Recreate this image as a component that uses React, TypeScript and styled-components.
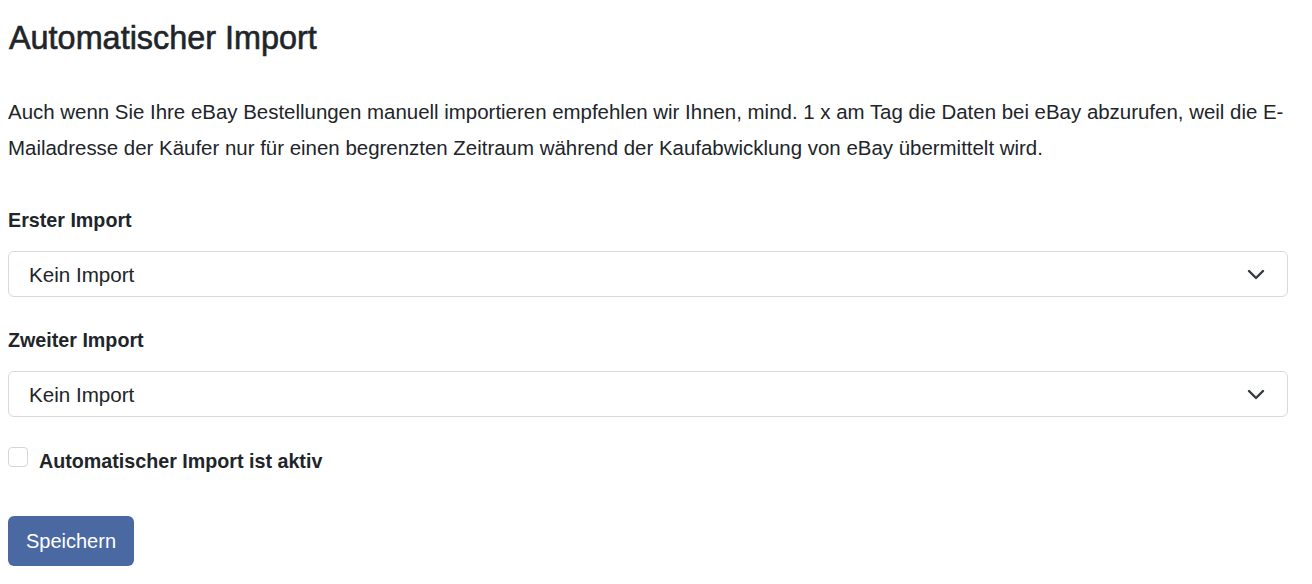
import React from "react";
import styled, { createGlobalStyle } from "styled-components";

const GlobalStyle = createGlobalStyle`
  html, body {
    margin: 0;
    padding: 0;
    background: #ffffff;
  }
  body {
    font-family: "Liberation Sans", Arial, Helvetica, sans-serif;
    color: #212529;
    -webkit-font-smoothing: antialiased;
  }
`;

const Page = styled.div`
  width: 1280px;
  padding: 19px 0 0 8px;
  display: flex;
  flex-direction: column;
`;

const Title = styled.h1`
  margin: 0;
  padding-left: 1px;
  font-size: 32.4px;
  line-height: 38px;
  font-weight: 400;
  -webkit-text-stroke: 0.6px #212529;
  color: #212529;
`;

const Intro = styled.p`
  margin: 37px 0 0;
  font-size: 20.45px;
  line-height: 36px;
  font-weight: 400;
`;

const Field = styled.div<{ $top: number }>`
  display: flex;
  flex-direction: column;
  gap: 16px;
  margin-top: ${(p) => p.$top}px;
`;

const Label = styled.label`
  font-size: 19.7px;
  line-height: 30px;
  font-weight: 700;
  color: #212529;
`;

const SelectWrap = styled.div`
  position: relative;
  width: 100%;
`;

const Select = styled.select`
  appearance: none;
  -webkit-appearance: none;
  width: 100%;
  height: 46px;
  box-sizing: border-box;
  padding: 0 50px 0 20px;
  border: 1px solid #d6d9dd;
  border-radius: 6px;
  background: #ffffff;
  font-family: "Liberation Sans", Arial, Helvetica, sans-serif;
  font-size: 20.6px;
  color: #212529;
  outline: none;
`;

const Chevron = styled.svg`
  position: absolute;
  right: 23px;
  top: 50%;
  transform: translateY(-50%);
  pointer-events: none;
`;

const CheckRow = styled.div`
  display: flex;
  align-items: flex-start;
  gap: 11px;
  margin-top: 29px;
`;

const Check = styled.input`
  appearance: none;
  -webkit-appearance: none;
  width: 20px;
  height: 20px;
  margin: 1px 0 0;
  box-sizing: border-box;
  border: 1px solid #d3d6da;
  border-radius: 4px;
  background: #ffffff;
`;

const CheckLabel = styled.label`
  font-size: 19.7px;
  line-height: 30px;
  font-weight: 700;
`;

const SaveButton = styled.button`
  align-self: flex-start;
  margin-top: 40px;
  width: 126px;
  height: 50px;
  border: none;
  border-radius: 6px;
  background: #4a69a2;
  color: #ffffff;
  font-family: "Liberation Sans", Arial, Helvetica, sans-serif;
  font-size: 20px;
  cursor: pointer;
`;

const ImportSelect: React.FC<{ id: string }> = ({ id }) => (
  <SelectWrap>
    <Select id={id} defaultValue="none">
      <option value="none">Kein Import</option>
    </Select>
    <Chevron width="18" height="12" viewBox="0 0 18 12" fill="none">
      <path d="M2 3l7 7 7-7" stroke="#343a40" strokeWidth="2.4" strokeLinecap="round" strokeLinejoin="round" />
    </Chevron>
  </SelectWrap>
);

export default function App() {
  return (
    <>
      <GlobalStyle />
      <Page>
        <Title>Automatischer Import</Title>
        <Intro>
          Auch wenn Sie Ihre eBay Bestellungen manuell importieren empfehlen wir Ihnen, mind. 1 x am Tag die Daten bei eBay abzurufen, weil die E-Mailadresse der Käufer nur für einen begrenzten Zeitraum während der Kaufabwicklung von eBay übermittelt wird.
        </Intro>
        <Field $top={39}>
          <Label htmlFor="first">Erster Import</Label>
          <ImportSelect id="first" />
        </Field>
        <Field $top={28}>
          <Label htmlFor="second">Zweiter Import</Label>
          <ImportSelect id="second" />
        </Field>
        <CheckRow>
          <Check type="checkbox" id="active" />
          <CheckLabel htmlFor="active">Automatischer Import ist aktiv</CheckLabel>
        </CheckRow>
        <SaveButton type="button">Speichern</SaveButton>
      </Page>
    </>
  );
}
